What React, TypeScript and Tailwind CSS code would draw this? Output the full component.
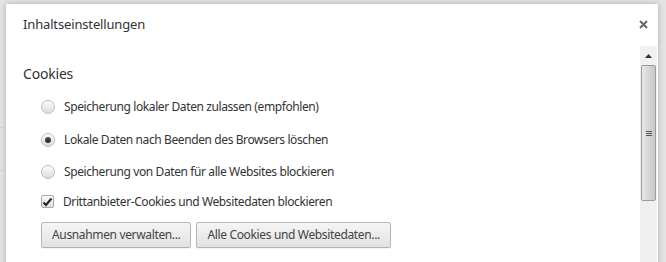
import React from 'react'

const font = { fontFamily: '"Noto Sans", "Open Sans", sans-serif' }

function Radio({ checked }: { checked?: boolean }) {
  return (
    <span className="relative flex h-[14px] w-[14px] items-center justify-center rounded-full border border-[#bcbcbc] bg-gradient-to-b from-[#fbfbfb] to-[#dcdcdc] shadow-[inset_0_1px_1px_rgba(255,255,255,0.8)]">
      {checked && (
        <span className="h-[6px] w-[6px] rounded-full bg-gradient-to-b from-[#555] to-[#222]" />
      )}
    </span>
  )
}

function Checkbox() {
  return (
    <span className="flex h-[13px] w-[13px] items-center justify-center rounded-[2px] border border-[#a8a8a8] bg-gradient-to-b from-[#fafafa] to-[#dedede]">
      <svg width="11" height="10" viewBox="0 0 11 10">
        <path d="M1.5 5.5 L4 8 L9.5 1.5" fill="none" stroke="#222" strokeWidth="2" />
      </svg>
    </span>
  )
}

function Button({ children }: { children: React.ReactNode }) {
  return (
    <button className="h-[26px] rounded-[2px] border border-[#b5b5b5] bg-gradient-to-b from-[#f5f5f5] to-[#e2e2e2] px-[10px] text-[12px] tracking-[-0.35px] text-[#444] shadow-[0_1px_0_rgba(0,0,0,0.05)]">
      {children}
    </button>
  )
}

export default function App() {
  const options = [
    { label: 'Speicherung lokaler Daten zulassen (empfohlen)', checked: false, h: 'h-[33px]' },
    { label: 'Lokale Daten nach Beenden des Browsers löschen', checked: true, h: 'h-[33px]' },
    { label: 'Speicherung von Daten für alle Websites blockieren', checked: false, h: 'h-[31px]' },
  ]

  return (
    <div className="relative h-[262px] w-[666px] overflow-hidden bg-[#e4e4e4]" style={font}>
      {/* Hintergrund-Reste links */}
      <div className="absolute left-0 top-[127px] h-px w-[6px] bg-[#cfcfcf]" />
      <div className="absolute left-0 top-[170px] h-px w-[6px] bg-[#cfcfcf]" />

      <div className="ml-[6px] mt-[4px] flex h-[300px] w-[652px] flex-col bg-white shadow-[0_0_6px_rgba(0,0,0,0.25)]">
        {/* Header */}
        <div className="flex h-[42px] items-start justify-between pl-[17px] pr-[10px] pt-[11px]">
          <span className="text-[13px] tracking-[-0.15px] text-[#333]">Inhaltseinstellungen</span>
          <svg width="9" height="9" viewBox="0 0 9 9" className="mt-[5px]">
            <path d="M1 1 L8 8 M8 1 L1 8" stroke="#666" strokeWidth="2" />
          </svg>
        </div>

        <div className="flex flex-1">
          {/* Content */}
          <div className="flex-1 pl-[17px] pt-[17px]">
            <div className="text-[14px] tracking-[-0.2px] text-[#333]">Cookies</div>
            <div className="mt-[6px] flex flex-col pl-[18px]">
              {options.map((o) => (
                <div key={o.label} className={`flex ${o.h} items-center gap-[9px] text-[12px] tracking-[-0.4px] text-[#333]`}>
                  <Radio checked={o.checked} />
                  <span>{o.label}</span>
                </div>
              ))}
              <div className="flex h-[29px] items-center gap-[9px] text-[12px] tracking-[-0.4px] text-[#333]">
                <Checkbox />
                <span>Drittanbieter-Cookies und Websitedaten blockieren</span>
              </div>
              <div className="mt-[6px] flex gap-[5px]">
                <Button>Ausnahmen verwalten...</Button>
                <Button>Alle Cookies und Websitedaten...</Button>
              </div>
            </div>
          </div>

          {/* Scrollbar */}
          <div className="mr-px flex w-[17px] flex-col bg-[#f0f0f0]">
            <div className="flex h-[19px] items-center justify-center">
              <svg width="7" height="4" viewBox="0 0 7 4">
                <path d="M0 4 L3.5 0 L7 4 Z" fill="#333" />
              </svg>
            </div>
            <div className="mx-px flex h-[136px] items-center justify-center rounded-[2px] border border-[#9a9a9a] bg-gradient-to-r from-[#e8e8e8] via-[#d6d6d6] to-[#c8c8c8]">
              <div className="flex flex-col gap-[1px]">
                <div className="h-px w-[6px] bg-[#555]" />
                <div className="h-px w-[6px] bg-[#555]" />
                <div className="h-px w-[6px] bg-[#555]" />
              </div>
            </div>
          </div>
        </div>
      </div>
    </div>
  )
}
